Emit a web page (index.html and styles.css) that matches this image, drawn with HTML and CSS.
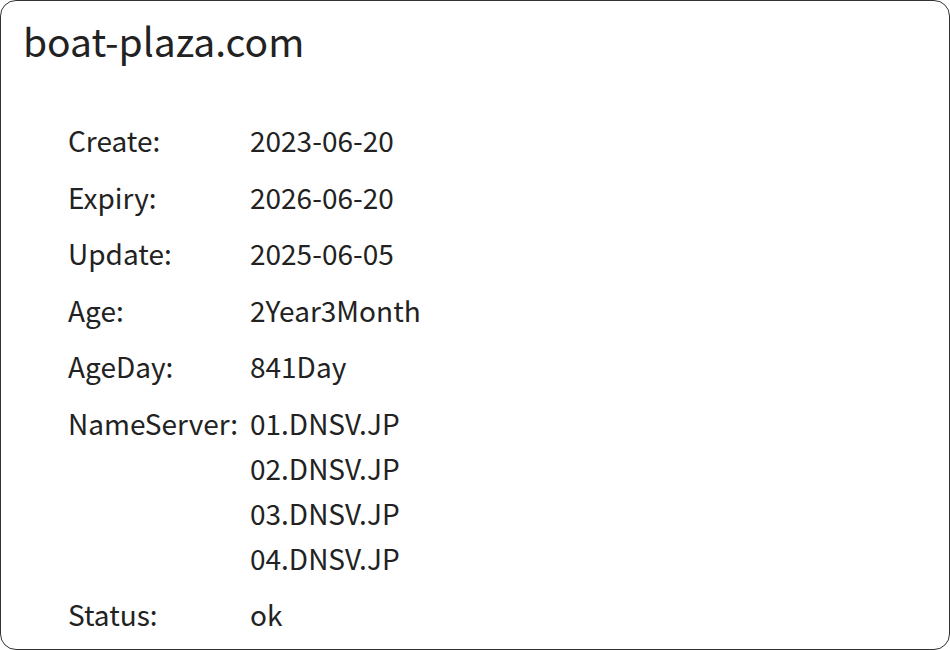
FILE: index.html
```html
<!DOCTYPE html>
<html>
<head>
<meta charset="utf-8">
<link rel="stylesheet" href="styles.css">
</head>
<body>
<div class="card">
  <h1 class="title">boat-plaza.com</h1>
  <div class="rows">
    <div class="row"><div class="label">Create:</div><div class="value">2023-06-20</div></div>
    <div class="row"><div class="label">Expiry:</div><div class="value">2026-06-20</div></div>
    <div class="row"><div class="label">Update:</div><div class="value">2025-06-05</div></div>
    <div class="row"><div class="label">Age:</div><div class="value">2Year3Month</div></div>
    <div class="row"><div class="label">AgeDay:</div><div class="value">841Day</div></div>
    <div class="row"><div class="label">NameServer:</div><div class="value">01.DNSV.JP<br>02.DNSV.JP<br>03.DNSV.JP<br>04.DNSV.JP</div></div>
    <div class="row"><div class="label">Status:</div><div class="value">ok</div></div>
  </div>
</div>
</body>
</html>
```
FILE: styles.css
```css
html, body {
  margin: 0;
  padding: 0;
  background: #fff;
}
body {
  font-family: "Noto Sans CJK JP", "Noto Sans", sans-serif;
  color: #222;
}
.card {
  box-sizing: border-box;
  width: 950px;
  height: 650px;
  border: 1px solid #333;
  border-radius: 16px;
  padding: 11px 22px;
}
.title {
  margin: 0;
  font-size: 39px;
  font-weight: 400;
  line-height: 56px;
}
.rows {
  margin-top: 50px;
  padding-left: 45px;
  display: flex;
  flex-direction: column;
  gap: 11.5px;
}
.row {
  display: flex;
  font-size: 28px;
  line-height: 45px;
}
.label {
  width: 182px;
  flex: none;
}
```
